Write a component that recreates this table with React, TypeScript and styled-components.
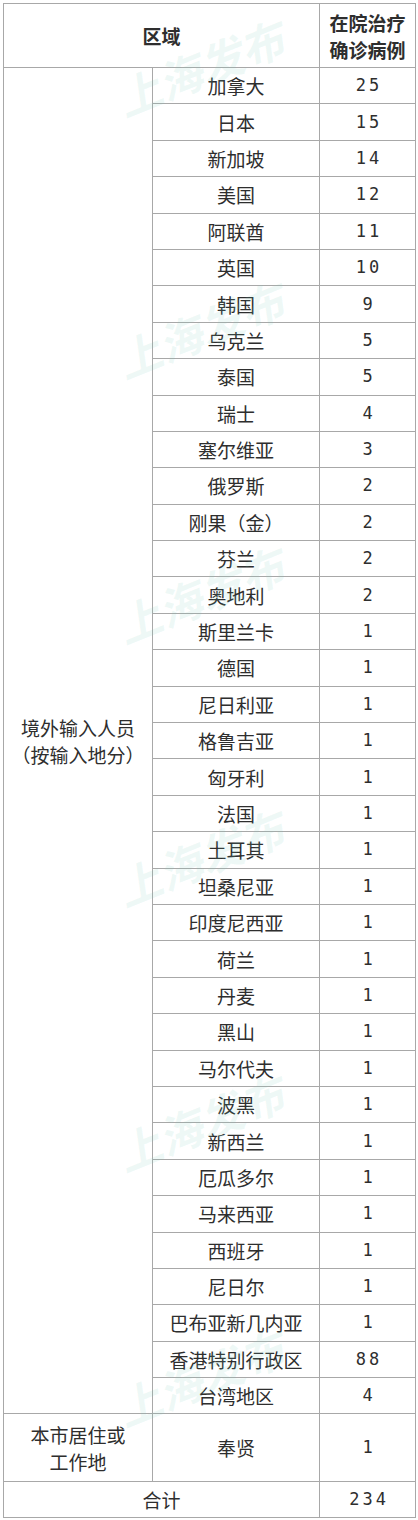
import React from 'react';
import styled, { createGlobalStyle } from 'styled-components';

const GlobalStyle = createGlobalStyle`
  html, body {
    margin: 0;
    padding: 0;
    background: #ffffff;
  }
  body {
    font-family: "Noto Sans CJK SC", "Noto Sans", sans-serif;
    color: #2e2e2e;
  }
`;

const Page = styled.div`
  position: relative;
  width: 418px;
  height: 1520px;
  padding: 3px 0 0 3px;
  box-sizing: border-box;
  overflow: hidden;
`;

const Table = styled.table`
  width: 412px;
  border-collapse: collapse;
  table-layout: fixed;
  border: 1px solid #c8c8c8;
`;

const Cell = styled.td<{ $bold?: boolean; $h?: number }>`
  border: 1px solid #a8a8a8;
  padding: 0;
  text-align: center;
  vertical-align: middle;
  font-size: 19px;
  line-height: 27px;
  font-weight: ${(p) => (p.$bold ? 700 : 400)};
  color: #2e2e2e;
  height: ${(p) => (p.$h ? `${p.$h}px` : 'auto')};
  box-sizing: border-box;
`;

const NumCell = styled(Cell)`
  font-family: "DejaVu Sans Mono", "Liberation Mono", monospace;
  font-size: 17px;
  letter-spacing: 3px;
  text-indent: 3px;
`;

// faint rotated "上海发布" stamp lying over the table
const Watermark = styled.div<{ $top: number }>`
  position: absolute;
  left: 118px;
  top: ${(p) => p.$top - 22}px;
  height: 44px;
  font-size: 44px;
  line-height: 44px;
  font-weight: 700;
  font-style: italic;
  color: rgba(120, 205, 190, 0.13);
  transform: rotate(-22deg);
  transform-origin: left center;
  white-space: nowrap;
  pointer-events: none;
`;

const rows: [string, string][] = [
  ['加拿大', '25'],
  ['日本', '15'],
  ['新加坡', '14'],
  ['美国', '12'],
  ['阿联酋', '11'],
  ['英国', '10'],
  ['韩国', '9'],
  ['乌克兰', '5'],
  ['泰国', '5'],
  ['瑞士', '4'],
  ['塞尔维亚', '3'],
  ['俄罗斯', '2'],
  ['刚果（金）', '2'],
  ['芬兰', '2'],
  ['奥地利', '2'],
  ['斯里兰卡', '1'],
  ['德国', '1'],
  ['尼日利亚', '1'],
  ['格鲁吉亚', '1'],
  ['匈牙利', '1'],
  ['法国', '1'],
  ['土耳其', '1'],
  ['坦桑尼亚', '1'],
  ['印度尼西亚', '1'],
  ['荷兰', '1'],
  ['丹麦', '1'],
  ['黑山', '1'],
  ['马尔代夫', '1'],
  ['波黑', '1'],
  ['新西兰', '1'],
  ['厄瓜多尔', '1'],
  ['马来西亚', '1'],
  ['西班牙', '1'],
  ['尼日尔', '1'],
  ['巴布亚新几内亚', '1'],
  ['香港特别行政区', '88'],
  ['台湾地区', '4'],
];

const marks = [100, 362, 627, 890, 1155, 1410];

export default function App() {
  return (
    <>
      <GlobalStyle />
      <Page>
        <Table>
          <colgroup>
            <col style={{ width: 149 }} />
            <col style={{ width: 167 }} />
            <col style={{ width: 96 }} />
          </colgroup>
          <tbody>
            <tr>
              <Cell colSpan={2} $bold $h={64}>
                区域
              </Cell>
              <Cell $bold $h={64}>
                在院治疗
                <br />
                确诊病例
              </Cell>
            </tr>
            {rows.map(([name, n], i) => (
              <tr key={name}>
                {i === 0 && <Cell rowSpan={rows.length}>境外输入人员<br />（按输入地分）</Cell>}
                <Cell $h={36.4}>{name}</Cell>
                <NumCell $h={36.4}>{n}</NumCell>
              </tr>
            ))}
            <tr>
              <Cell $h={67.5}>
                本市居住或
                <br />
                工作地
              </Cell>
              <Cell $h={67.5}>奉贤</Cell>
              <NumCell $h={67.5}>1</NumCell>
            </tr>
            <tr>
              <Cell colSpan={2} $h={36}>
                合计
              </Cell>
              <NumCell $h={36}>234</NumCell>
            </tr>
          </tbody>
        </Table>
        {marks.map((t) => (
          <Watermark key={t} $top={t}>
            上海发布
          </Watermark>
        ))}
      </Page>
    </>
  );
}
